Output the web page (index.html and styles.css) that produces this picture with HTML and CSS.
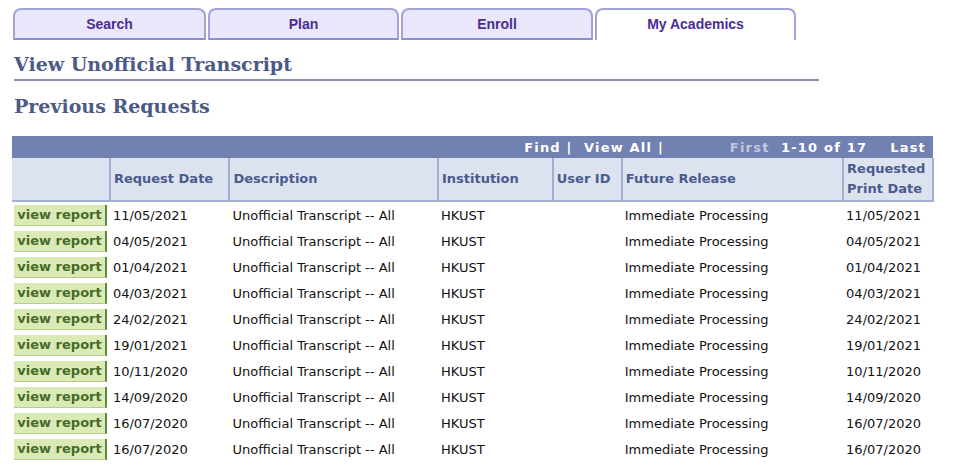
FILE: index.html
```html
<!DOCTYPE html>
<html>
<head>
<meta charset="utf-8">
<link rel="stylesheet" href="styles.css">
</head>
<body>
<div class="page">
  <div class="tabs">
    <div class="tab t1">Search</div>
    <div class="tab t2">Plan</div>
    <div class="tab t3">Enroll</div>
    <div class="tab t4 active">My Academics</div>
  </div>
  <h1 class="title">View Unofficial Transcript</h1>
  <h2 class="subtitle">Previous Requests</h2>
  <table class="grid">
    <thead>
      <tr class="nav">
        <td colspan="7">
          <div class="navbar">
            <span class="nav-links">Find | &nbsp;View All |</span>
            <span class="nav-pages"><span class="dim">First</span> &nbsp;1-10 of 17 &nbsp;&nbsp; Last</span>
          </div>
        </td>
      </tr>
      <tr class="cols">
        <th class="c0"></th>
        <th class="c1">Request Date</th>
        <th class="c2">Description</th>
        <th class="c3">Institution</th>
        <th class="c4">User ID</th>
        <th class="c5">Future Release</th>
        <th class="c6">Requested Print Date</th>
      </tr>
    </thead>
    <tbody>
      <tr><td><span class="btn">view report</span></td><td>11/05/2021</td><td>Unofficial Transcript -- All</td><td>HKUST</td><td></td><td>Immediate Processing</td><td>11/05/2021</td></tr>
      <tr><td><span class="btn">view report</span></td><td>04/05/2021</td><td>Unofficial Transcript -- All</td><td>HKUST</td><td></td><td>Immediate Processing</td><td>04/05/2021</td></tr>
      <tr><td><span class="btn">view report</span></td><td>01/04/2021</td><td>Unofficial Transcript -- All</td><td>HKUST</td><td></td><td>Immediate Processing</td><td>01/04/2021</td></tr>
      <tr><td><span class="btn">view report</span></td><td>04/03/2021</td><td>Unofficial Transcript -- All</td><td>HKUST</td><td></td><td>Immediate Processing</td><td>04/03/2021</td></tr>
      <tr><td><span class="btn">view report</span></td><td>24/02/2021</td><td>Unofficial Transcript -- All</td><td>HKUST</td><td></td><td>Immediate Processing</td><td>24/02/2021</td></tr>
      <tr><td><span class="btn">view report</span></td><td>19/01/2021</td><td>Unofficial Transcript -- All</td><td>HKUST</td><td></td><td>Immediate Processing</td><td>19/01/2021</td></tr>
      <tr><td><span class="btn">view report</span></td><td>10/11/2020</td><td>Unofficial Transcript -- All</td><td>HKUST</td><td></td><td>Immediate Processing</td><td>10/11/2020</td></tr>
      <tr><td><span class="btn">view report</span></td><td>14/09/2020</td><td>Unofficial Transcript -- All</td><td>HKUST</td><td></td><td>Immediate Processing</td><td>14/09/2020</td></tr>
      <tr><td><span class="btn">view report</span></td><td>16/07/2020</td><td>Unofficial Transcript -- All</td><td>HKUST</td><td></td><td>Immediate Processing</td><td>16/07/2020</td></tr>
      <tr><td><span class="btn">view report</span></td><td>16/07/2020</td><td>Unofficial Transcript -- All</td><td>HKUST</td><td></td><td>Immediate Processing</td><td>16/07/2020</td></tr>
    </tbody>
  </table>
</div>
</body>
</html>
```
FILE: styles.css
```css
html, body {
  margin: 0;
  padding: 0;
  background: #ffffff;
}
.page {
  padding: 8px 0 0 12px;
  font-family: "DejaVu Sans", Verdana, sans-serif;
}
.tabs {
  display: flex;
  align-items: flex-end;
  gap: 2px;
  margin-left: 1px;
}
.tab {
  box-sizing: border-box;
  height: 32px;
  border: 2px solid #a3a3dc;
  border-radius: 8px 8px 0 0;
  background: #e9e7f9;
  color: #4b2d97;
  font-family: "Liberation Sans", Arial, sans-serif;
  font-weight: bold;
  font-size: 14px;
  text-align: center;
  line-height: 29px;
  border-bottom: 2px solid #8e8ec8;
}
.t1 { width: 193px; }
.t2 { width: 191px; }
.t3 { width: 192px; }
.t4 { width: 201px; }
.tab.active {
  background: #ffffff;
  border-bottom: none;
  padding-bottom: 2px;
}
.title {
  margin: 11px 0 0 2px;
  width: 805px;
  font-family: "DejaVu Serif", Georgia, serif;
  font-size: 19px;
  font-weight: bold;
  color: #4c5a86;
  line-height: 26px;
  padding-bottom: 2px;
  border-bottom: 2px solid #8a8fb6;
}
.subtitle {
  margin: 12px 0 0 2px;
  font-family: "DejaVu Serif", Georgia, serif;
  font-size: 19px;
  font-weight: bold;
  color: #4c5a86;
  line-height: 26px;
}
.grid {
  margin-top: 17px;
  border-collapse: collapse;
  width: 922px;
  font-size: 13px;
  color: #111;
}
.nav td {
  background: #7181b1;
  height: 22px;
  padding: 0;
}
.navbar {
  display: flex;
  justify-content: flex-end;
  color: #ffffff;
  font-weight: bold;
  font-size: 13px;
  letter-spacing: 1.2px;
}
.nav-links { margin-right: 66px; }
.nav-pages { margin-right: 7px; }
.dim { color: #c2c8de; }
.cols th {
  background: #dce3ee;
  border: 2px solid #9fb0d2;
  border-top: none;
  color: #4a5b8e;
  font-size: 13px;
  font-weight: bold;
  text-align: left;
  padding: 0 3px;
  height: 42px;
  line-height: 20px;
}
.cols th.c0 { border-left: none; }
.c0 { width: 91px; }
.c1 { width: 113px; }
.c2 { width: 202px; }
.c3 { width: 108px; }
.c4 { width: 62px; }
.c5 { width: 216px; }
.c6 { width: 82px; }
tbody td {
  height: 26px;
  padding: 0 3px;
  white-space: nowrap;
}
tbody td:first-child {
  padding: 0 0 0 2px;
}
.btn {
  display: inline-block;
  box-sizing: border-box;
  width: 93px;
  height: 21px;
  line-height: 20px;
  background: #d9eab4;
  border-right: 2px solid #5f8a3a;
  border-bottom: 1px solid #b5cc8e;
  color: #476a2a;
  font-weight: bold;
  font-size: 13px;
  text-align: center;
  vertical-align: middle;
}
```
